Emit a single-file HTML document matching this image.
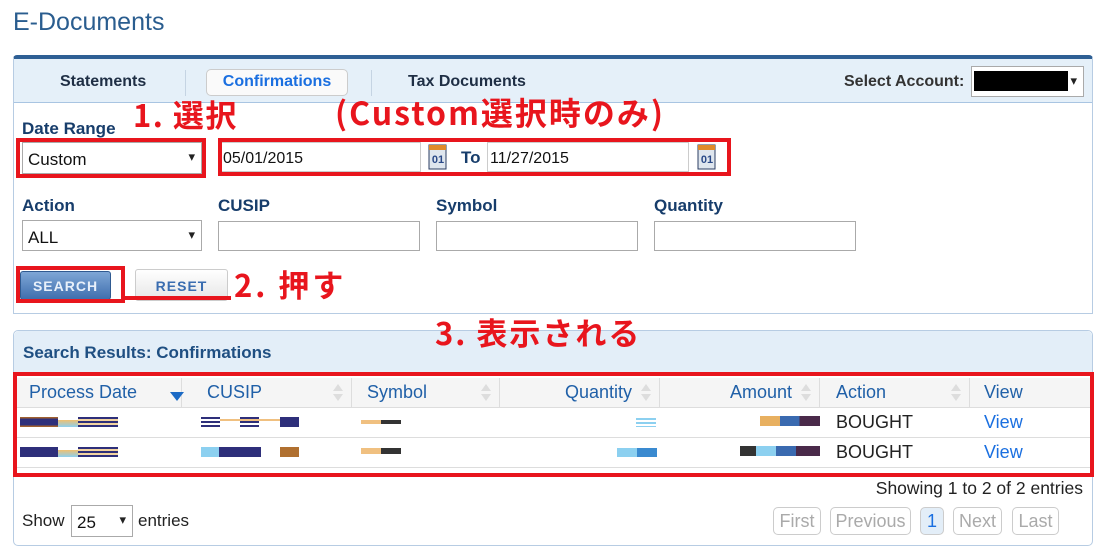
<!DOCTYPE html>
<html><head><meta charset="utf-8"><style>
*{box-sizing:border-box;margin:0;padding:0}
body{width:1101px;height:555px;background:#fff;position:relative;overflow:hidden;font-family:"Liberation Sans",Arial,sans-serif;color:#222}
.a{position:absolute}
.lbl{position:absolute;font-weight:bold;font-size:16px;color:#173d6b}
.inp{position:absolute;border:1px solid #aaa;background:#fff;height:30px;font-size:16px;padding:7px 5px;color:#111}
.sel:after{content:"▾";position:absolute;right:6px;top:6px;font-size:13px;color:#222}
.red{position:absolute;border:4px solid #e8151d}
.rt{position:absolute;color:#e8151d;font-weight:bold;font-family:"Noto Sans CJK JP",sans-serif;white-space:nowrap;line-height:1}
.th{position:absolute;top:378px;height:30px;border-right:1px solid #ddd;font-size:18px;color:#2060a8;padding-top:4px}
.sort{position:absolute;right:8px;top:6px;width:10px;height:18px}
.sort:before{content:"";position:absolute;left:0;top:0;border:5px solid transparent;border-bottom:7px solid #ddd;border-top:0}
.sort:after{content:"";position:absolute;left:0;top:10px;border:5px solid transparent;border-top:7px solid #ddd;border-bottom:0}
.row{position:absolute;left:16px;width:1074px;height:30px;border-bottom:1px solid #ddd}
.cell{position:absolute;font-size:18px;top:5px}
.b{position:absolute;height:10px}
.pg{position:absolute;top:507px;height:28px;border:1px solid #ccc;border-radius:5px;font-size:18px;color:#aaa;text-align:center;padding-top:3px;background:#fff}
</style></head><body>
<div class="a" style="left:13px;top:8px;font-size:25px;color:#2a5d8f">E-Documents</div>

<div class="a" style="left:13px;top:55px;width:1080px;height:259px;border:1px solid #b7cce3;border-top:4px solid #2e5f94;border-radius:4px 4px 0 0"></div>
<div class="a" style="left:14px;top:59px;width:1078px;height:44px;background:#e5f0f9;border-bottom:1px solid #a9c5e2"></div>
<div class="a" style="left:60px;top:73px;font-weight:bold;font-size:16px;color:#1f2f45">Statements</div>
<div class="a" style="left:185px;top:70px;width:1px;height:26px;background:#c5d4e3"></div>
<div class="a" style="left:206px;top:69px;width:142px;height:27px;background:#fafafa;border:1px solid #ccc;border-radius:5px;font-weight:bold;font-size:16px;color:#1a6fe0;text-align:center;padding-top:3px">Confirmations</div>
<div class="a" style="left:371px;top:70px;width:1px;height:26px;background:#c5d4e3"></div>
<div class="a" style="left:408px;top:73px;font-weight:bold;font-size:16px;color:#1f2f45">Tax Documents</div>
<div class="a" style="left:844px;top:73px;font-weight:bold;font-size:16px;color:#333">Select Account:</div>
<div class="a sel" style="left:971px;top:66px;width:113px;height:31px;border:1px solid #aaa;background:#fff"><div class="a" style="left:2px;top:4px;width:94px;height:20px;background:#000"></div></div>

<div class="lbl" style="left:22px;top:119px;font-size:17px">Date Range</div>
<div class="inp sel" style="left:22px;top:142px;width:180px;height:32px;font-size:17px">Custom</div>
<div class="inp" style="left:220px;top:142px;width:201px;border-color:#ccc;padding-left:2px">05/01/2015</div>
<svg class="a" style="left:428px;top:142px" width="20" height="28" viewBox="0 0 20 28"><rect x="1" y="3" width="17" height="24" fill="#dfe6ee" stroke="#2b3d63"/><rect x="1" y="3" width="17" height="5" fill="#e08a2a"/><text x="10" y="21" font-size="11" font-weight="bold" fill="#2b4a88" text-anchor="middle" font-family="Liberation Sans">01</text></svg>
<div class="a" style="left:461px;top:148px;font-weight:bold;font-size:17px;color:#173d6b">To</div>
<div class="inp" style="left:487px;top:142px;width:202px;border-color:#ccc;padding-left:2px">11/27/2015</div>
<svg class="a" style="left:697px;top:142px" width="20" height="28" viewBox="0 0 20 28"><rect x="1" y="3" width="17" height="24" fill="#dfe6ee" stroke="#2b3d63"/><rect x="1" y="3" width="17" height="5" fill="#e08a2a"/><text x="10" y="21" font-size="11" font-weight="bold" fill="#2b4a88" text-anchor="middle" font-family="Liberation Sans">01</text></svg>

<div class="lbl" style="left:22px;top:196px;font-size:17px">Action</div>
<div class="lbl" style="left:218px;top:196px;font-size:17px">CUSIP</div>
<div class="lbl" style="left:436px;top:196px;font-size:17px">Symbol</div>
<div class="lbl" style="left:654px;top:196px;font-size:17px">Quantity</div>
<div class="inp sel" style="left:22px;top:220px;width:180px;height:31px;font-size:17px">ALL</div>
<div class="inp" style="left:218px;top:221px;width:202px"></div>
<div class="inp" style="left:436px;top:221px;width:202px"></div>
<div class="inp" style="left:654px;top:221px;width:202px"></div>

<div class="a" style="left:20px;top:271px;width:91px;height:29px;border-radius:3px;background:linear-gradient(#7ea6d6,#3f6fae);border:1px solid #2f5a91;color:#e8f0fa;font-weight:bold;font-size:14px;text-align:center;padding-top:6px;letter-spacing:1px">SEARCH</div>
<div class="a" style="left:135px;top:269px;width:93px;height:32px;border-radius:3px;background:linear-gradient(#fff,#e6e6e6);border:1px solid #ccc;color:#3a6db0;font-weight:bold;font-size:14px;text-align:center;padding-top:8px;letter-spacing:1px">RESET</div>

<div class="a" style="left:13px;top:330px;width:1080px;height:216px;border:1px solid #b7cce3;border-radius:5px"></div>
<div class="a" style="left:14px;top:331px;width:1078px;height:43px;background:#e3eef8;border-radius:5px 5px 0 0"></div>
<div class="a" style="left:23px;top:343px;font-weight:bold;font-size:17px;color:#1f4f82">Search Results: Confirmations</div>
<div class="a" style="left:16px;top:378px;width:1074px;height:30px;background:#f5f5f5;border-bottom:1px solid #ddd"></div>
<div class="th" style="left:16px;width:166px;padding-left:13px">Process Date<div class="a" style="left:154px;top:14px;border:7px solid transparent;border-top:9px solid #1b6ac5;border-bottom:0"></div></div>
<div class="th" style="left:182px;width:170px;padding-left:25px">CUSIP<div class="sort"></div></div>
<div class="th" style="left:352px;width:148px;padding-left:15px">Symbol<div class="sort"></div></div>
<div class="th" style="left:500px;width:160px;text-align:right;padding-right:27px">Quantity<div class="sort"></div></div>
<div class="th" style="left:660px;width:160px;text-align:right;padding-right:27px">Amount<div class="sort"></div></div>
<div class="th" style="left:820px;width:150px;padding-left:16px">Action<div class="sort"></div></div>
<div class="th" style="left:970px;width:120px;padding-left:14px;border-right:0">View</div>

<div class="row" style="top:408px"></div>
<div class="row" style="top:438px"></div>
<div class="b" style="left:20px;top:417px;width:38px;background:linear-gradient(#a06030 15%,#2e2f7a 15%,#2e2f7a 85%,#a06030 85%)"></div>
<div class="b" style="left:58px;top:417px;width:20px;background:linear-gradient(#fff 30%,#f0c070 30%,#8cd0f0)"></div>
<div class="b" style="left:78px;top:417px;width:40px;background:repeating-linear-gradient(#2e2f7a 0 2px,#f3d4a0 2px 4px)"></div>
<div class="b" style="left:201px;top:417px;width:19px;background:repeating-linear-gradient(#2e2f7a 0 2px,#fff 2px 4px)"></div>
<div class="b" style="left:240px;top:417px;width:19px;background:repeating-linear-gradient(#2e2f7a 0 2px,#fff 2px 4px)"></div>
<div class="b" style="left:220px;top:419px;width:60px;height:2px;background:#f0c080"></div>
<div class="b" style="left:280px;top:417px;width:19px;background:#2e2f7a"></div>
<div class="b" style="left:361px;top:420px;width:40px;height:4px;background:linear-gradient(90deg,#f0c080 50%,#333 50%)"></div>
<div class="b" style="left:636px;top:418px;width:20px;height:9px;background:repeating-linear-gradient(#8cd0f0 0 2px,#fff 2px 4px)"></div>
<div class="b" style="left:760px;top:416px;width:60px;background:linear-gradient(90deg,#e8b060 33%,#3a6ab0 33%,#3a6ab0 66%,#4a2a4a 66%)"></div>
<div class="cell" style="left:836px;top:412px">BOUGHT</div>
<div class="cell" style="left:984px;top:412px;color:#1a6fe0">View</div>
<div class="b" style="left:20px;top:447px;width:38px;background:#2e2f7a"></div>
<div class="b" style="left:58px;top:447px;width:20px;background:linear-gradient(#fff 30%,#f0c070 30%,#8cd0f0)"></div>
<div class="b" style="left:78px;top:447px;width:40px;background:repeating-linear-gradient(#2e2f7a 0 2px,#f3d4a0 2px 4px)"></div>
<div class="b" style="left:201px;top:447px;width:60px;background:linear-gradient(90deg,#8cd0f0 30%,#2e2f7a 30%)"></div>
<div class="b" style="left:280px;top:447px;width:19px;background:#b07030"></div>
<div class="b" style="left:361px;top:448px;width:40px;height:6px;background:linear-gradient(90deg,#f0c080 50%,#333 50%)"></div>
<div class="b" style="left:617px;top:448px;width:40px;height:9px;background:linear-gradient(90deg,#8cd0f0 50%,#3a8ad0 50%)"></div>
<div class="b" style="left:740px;top:446px;width:80px;background:linear-gradient(90deg,#333 20%,#8cd0f0 20%,#8cd0f0 45%,#3a6ab0 45%,#3a6ab0 70%,#4a2a4a 70%)"></div>
<div class="cell" style="left:836px;top:442px">BOUGHT</div>
<div class="cell" style="left:984px;top:442px;color:#1a6fe0">View</div>

<div class="a" style="right:18px;top:478px;font-size:17.5px;color:#222">Showing 1 to 2 of 2 entries</div>
<div class="a" style="left:22px;top:511px;font-size:17px">Show</div>
<div class="inp sel" style="left:71px;top:505px;width:62px;height:32px;font-size:17px">25</div>
<div class="a" style="left:138px;top:511px;font-size:17px">entries</div>
<div class="pg" style="left:773px;width:48px">First</div>
<div class="pg" style="left:830px;width:81px">Previous</div>
<div class="pg" style="left:920px;width:24px;background:#e3eef8;color:#1a6fe0">1</div>
<div class="pg" style="left:953px;width:49px">Next</div>
<div class="pg" style="left:1012px;width:47px">Last</div>

<div class="red" style="left:16px;top:138px;width:190px;height:40px"></div>
<div class="red" style="left:218px;top:138px;width:513px;height:38px"></div>
<div class="red" style="left:16px;top:266px;width:109px;height:37px"></div>
<div class="a" style="left:124px;top:296px;width:107px;height:4px;background:#e8151d"></div>
<div class="red" style="left:13px;top:372px;width:1081px;height:105px"></div>
<div class="rt" style="left:133px;top:98px;font-size:31px;letter-spacing:1.5px">1. 選択</div>
<div class="rt" style="left:335px;top:96px;font-size:32px;letter-spacing:2px">(Custom選択時のみ)</div>
<div class="rt" style="left:234px;top:268px;font-size:31px;letter-spacing:3px">2. 押す</div>
<div class="rt" style="left:435px;top:316px;font-size:31px;letter-spacing:2px">3. 表示される</div>
</body></html>
